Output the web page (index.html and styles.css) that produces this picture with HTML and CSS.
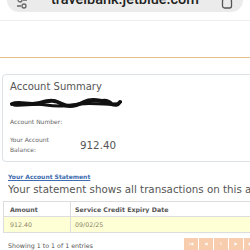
FILE: index.html
```html
<!DOCTYPE html>
<html lang="en">
<head>
    <meta charset="UTF-8">
    <meta name="viewport" content="width=device-width, initial-scale=1.0">
    <title>TravelBank Account</title>
    <link rel="stylesheet" href="styles.css">
</head>
<body>
    <div class="browser-top">
        <div class="urlbar">
            <svg class="url-icon left" width="12" height="12" viewBox="0 0 12 12">
                <circle cx="4" cy="3" r="2" fill="none" stroke="#666" stroke-width="1.3"/>
                <path d="M7 3h4M1 9h4" stroke="#666" stroke-width="1.3"/>
                <circle cx="8" cy="9" r="2" fill="none" stroke="#666" stroke-width="1.3"/>
            </svg>
            <span class="url-text">travelbank.jetblue.com</span>
            <svg class="url-icon right" width="12" height="12" viewBox="0 0 12 12">
                <rect x="1.5" y="1" width="9" height="9" rx="2" fill="none" stroke="#555" stroke-width="1.3"/>
            </svg>
        </div>
    </div>
    <div class="site-header"></div>

    <div class="card">
        <h2 class="card-title">Account Summary</h2>
        <svg class="redacted" width="112" height="12" viewBox="0 0 112 12">
            <path d="M2 7 C10 4, 20 9, 30 6 S45 3, 52 7 S66 9, 74 5 S90 3, 98 6 S108 8, 110 5" stroke="#111" stroke-width="4" fill="none" stroke-linecap="round"/>
            <path d="M4 8 C14 9, 24 6, 36 8 S56 9, 70 7 S88 8, 106 7" stroke="#111" stroke-width="3" fill="none" stroke-linecap="round"/>
            <path d="M38 4 C42 2, 46 3, 48 5" stroke="#111" stroke-width="2" fill="none"/>
            <path d="M92 3 C96 2, 100 4, 102 6" stroke="#111" stroke-width="2" fill="none"/>
        </svg>
        <div class="summary-row">
            <span class="label">Account Number:</span>
            <span class="value"></span>
        </div>
        <div class="summary-row">
            <span class="label">Your Account<br>Balance:</span>
            <span class="value">912.40</span>
        </div>
    </div>

    <a href="#" class="statement-link">Your Account Statement</a>
    <p class="statement-text">Your statement shows all transactions on this account.</p>

    <table class="statement">
        <thead>
            <tr>
                <th class="col-amount">Amount</th>
                <th>Service Credit Expiry Date</th>
            </tr>
        </thead>
        <tbody>
            <tr>
                <td>912.40</td>
                <td>09/02/25</td>
            </tr>
        </tbody>
    </table>

    <div class="table-footer">
        <span class="entries">Showing 1 to 1 of 1 entries</span>
        <div class="pager">
            <span class="page-btn">|&#9664;</span>
            <span class="page-btn">&#9664;</span>
            <span class="page-btn">1</span>
            <span class="page-btn">&#9654;</span>
            <span class="page-btn">&#9654;|</span>
        </div>
    </div>
</body>
</html>
```

FILE: styles.css
```css
body {
    font-family: "DejaVu Sans", Verdana, sans-serif;
    background-color: #ffffff;
    color: #555555;
    margin: 0;
    width: 250px;
    height: 250px;
    overflow: hidden;
}
.browser-top {
    display: flow-root;
    height: 20px;
    border-bottom: 1px solid #eeeeee;
}
.urlbar {
    position: relative;
    margin: -12px 7px 0 7px;
    height: 24px;
    background: #ebebeb;
    border-radius: 12px;
    text-align: center;
}
.url-text {
    font-family: Roboto, sans-serif;
    font-weight: 500;
    font-size: 14.5px;
    line-height: 24px;
    color: #222222;
}
.url-icon {
    position: absolute;
    top: 9px;
}
.url-icon.left {
    left: 9px;
}
.url-icon.right {
    right: 10px;
    top: 10px;
}
.site-header {
    height: 36px;
    border-bottom: 1px solid #e4bf8a;
}
.card {
    margin: 16px 0 0 2px;
    width: 280px;
    border: 1px solid #dce2e7;
    border-radius: 4px;
    padding: 6px 7px 6px 7px;
}
.card-title {
    font-size: 10px;
    line-height: 12px;
    font-weight: normal;
    margin: 0;
    color: #555555;
}
.redacted {
    display: block;
    margin: 4px 0 0 0;
}
.summary-row {
    display: flex;
    align-items: center;
    margin-top: 8px;
    min-height: 10px;
}
.label {
    width: 70px;
    font-size: 6px;
    line-height: 10px;
    color: #666666;
}
.value {
    font-size: 10.3px;
    color: #555555;
}
.statement-link {
    display: block;
    margin: 11px 0 0 8px;
    font-size: 6px;
    font-weight: bold;
    color: #3d6cb0;
    text-decoration: underline;
}
.statement-text {
    margin: 3px 0 0 8px;
    font-size: 10.3px;
    line-height: 12px;
    white-space: nowrap;
}
table {
    width: 300px;
    margin: 6px 0 0 3px;
    border-collapse: collapse;
}
th, td {
    border: 1px solid #dddddd;
    font-size: 6.3px;
    text-align: left;
    padding: 0 5px 0 6px;
    height: 14px;
}
th {
    font-weight: bold;
    color: #555555;
    background: #ffffff;
}
.col-amount {
    width: 55px;
}
td {
    background-color: #ffffd6;
    color: #8a7f66;
    height: 15px;
}
td + td, th + th {
    padding-left: 4px;
}
.table-footer {
    display: flex;
    justify-content: space-between;
    align-items: center;
    margin: 5px 0 0 8px;
}
.entries {
    font-size: 6.3px;
    padding-top: 3px;
}
.pager {
    display: flex;
    gap: 1px;
    margin-right: -8px;
}
.page-btn {
    width: 14px;
    height: 12px;
    background: #f8cdae;
    color: #ffffff;
    font-size: 4px;
    line-height: 12px;
    text-align: center;
}
```
